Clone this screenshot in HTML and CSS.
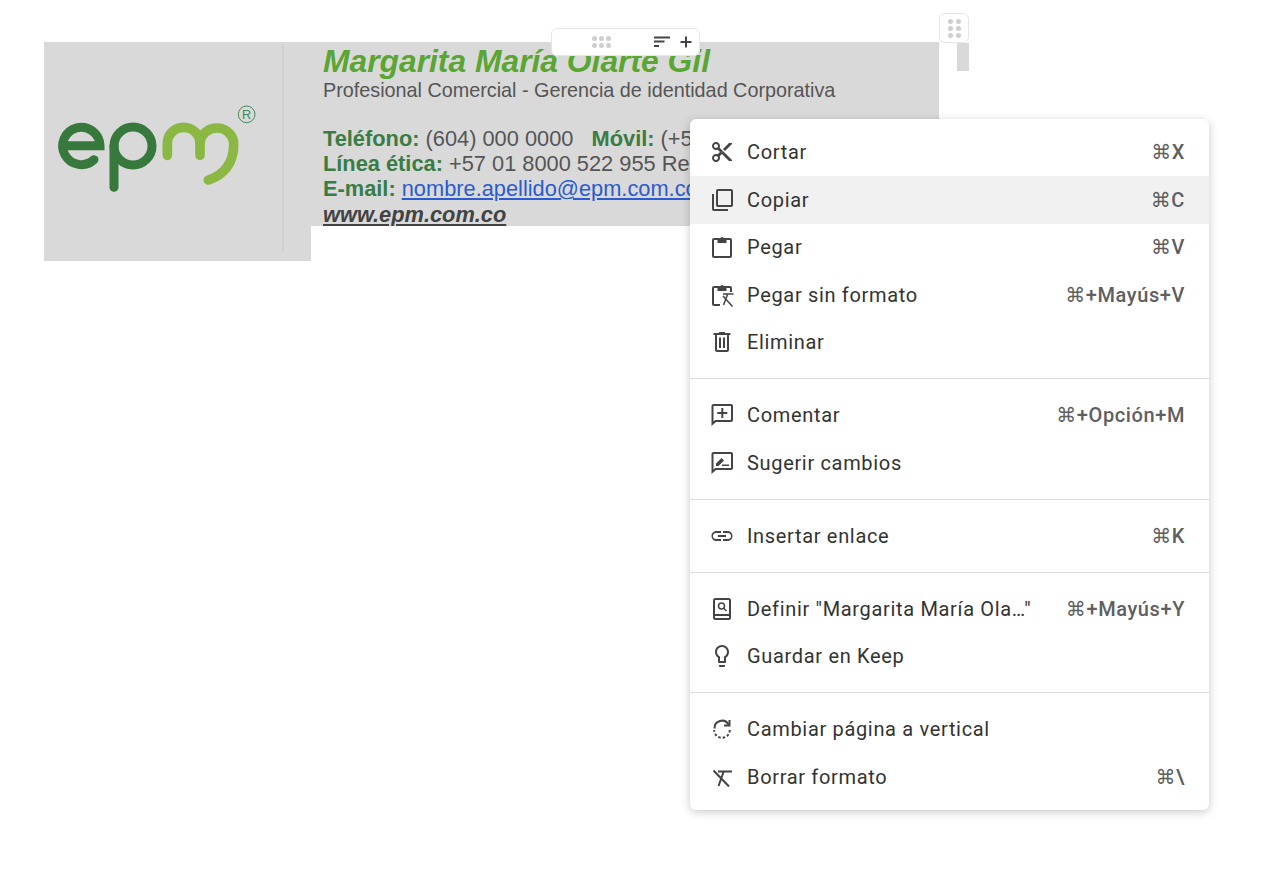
FILE: index.html
```html
<!DOCTYPE html>
<html lang="es">
<head>
<meta charset="utf-8">
<title>Firma EPM</title>
<link rel="stylesheet" href="styles.css">
</head>
<body>
<main class="page">
  <section class="signature">
    <div class="logo-cell">
      <svg class="logo" viewBox="0 0 630 300" width="210" height="100" aria-label="epm">
        <g class="logo-dark">
          <path d="M38 137H150A56 56 0 1 0 132 179"/>
          <circle cx="249" cy="138" r="57"/>
          <path d="M192 138V262"/>
        </g>
        <g class="logo-light">
          <path d="M352 166V130A49 48 0 0 1 450 130V166"/>
          <path d="M450 130A50 48 0 0 1 551 135C551 190 520 226 475 240"/>
        </g>
        <circle class="logo-reg" cx="590" cy="43" r="25"/>
        <text class="logo-r" x="590" y="57">R</text>
      </svg>
    </div>
    <div class="text-cell">
      <p class="name">Margarita María Olarte Gil</p>
      <p class="role">Profesional Comercial - Gerencia de identidad Corporativa</p>
      <p class="line blank">&nbsp;</p>
      <p class="line"><b>Teléfono:</b> (604) 000 0000 &nbsp; <b>Móvil:</b> (+5</p>
      <p class="line"><b>Línea ética:</b> +57 01 8000 522 955 Re</p>
      <p class="line"><b>E-mail:</b> <a class="mail" href="#">nombre.apellido@epm.com.co</a></p>
      <p class="line last"><a class="web" href="#">www.epm.com.co</a></p>
    </div>
  </section>
</main>

<div class="row-toolbar">
  <span class="dots dots-h"><i></i><i></i><i></i><i></i><i></i><i></i></span>
  <svg class="tool-icon" viewBox="0 0 16 12" width="16" height="12"><path d="M0 0.500h16v2H0zM0 4.500h10.500v2H0zM0 9h5v2H0z"/></svg>
  <svg class="tool-icon plus" viewBox="0 0 12 12" width="12" height="12"><path d="M5 .5h2v4.500h4.500v2H7v4.500H5V7H.5V5H5z"/></svg>
</div>

<div class="col-handle"><span class="dots dots-v"><i></i><i></i><i></i><i></i><i></i><i></i></span></div>
<div class="col-strip"></div>

<nav class="menu">
  <div class="item">
    <svg class="icon" viewBox="0 0 24 24"><path class="fill" d="M9.640 7.640c.23-.5.36-1.050.36-1.640 0-2.210-1.790-4-4-4S2 3.790 2 6s1.790 4 4 4c.59 0 1.140-.13 1.640-.36L10 12l-2.360 2.360C7.140 14.130 6.590 14 6 14c-2.210 0-4 1.790-4 4s1.790 4 4 4 4-1.790 4-4c0-.59-.13-1.140-.36-1.640L12 14l7 7h3v-1L9.640 7.640zM6 8c-1.100 0-2-.89-2-2s.9-2 2-2 2 .89 2 2-.9 2-2 2zm0 12c-1.100 0-2-.89-2-2s.9-2 2-2 2 .89 2 2-.9 2-2 2zm6-7.500c-.28 0-.5-.22-.5-.5s.22-.5.5-.5.5.22.5.5-.22.5-.5.5zM19 3l-6 6 2 2 7-7V3h-3z"/></svg>
    <span class="label">Cortar</span><span class="keys">⌘X</span>
  </div>
  <div class="item active">
    <svg class="icon" viewBox="0 0 24 24"><rect class="line-i" x="7" y="2" width="15" height="16" rx="1"/><path class="line-i" d="M3 6V21a1 1 0 0 0 1 1H18"/></svg>
    <span class="label">Copiar</span><span class="keys">⌘C</span>
  </div>
  <div class="item">
    <svg class="icon" viewBox="0 0 24 24"><rect class="line-i" x="3" y="4" width="18" height="18" rx="1"/><path class="fill" d="M7.500 3h3a1.700 1.700 0 0 1 3 0h3v5h-9z"/></svg>
    <span class="label">Pegar</span><span class="keys">⌘V</span>
  </div>
  <div class="item">
    <svg class="icon" viewBox="0 0 24 24"><path class="line-i" d="M10 22H4a1 1 0 0 1-1-1V5a1 1 0 0 1 1-1H20a1 1 0 0 1 1 1V9"/><path class="fill" d="M7.500 3h3a1.700 1.700 0 0 1 3 0h3v5h-9z"/><path class="line-t" d="M13 11H23.500M13 13L22.500 23.500M17.500 11.500L13.500 22"/></svg>
    <span class="label">Pegar sin formato</span><span class="keys">⌘+Mayús+V</span>
  </div>
  <div class="item">
    <svg class="icon" viewBox="0 0 24 24"><path class="fill" d="M15 3V2H9v1H3.500v2H5v15c0 1.100.9 2 2 2h10c1.100 0 2-.9 2-2V5h1.500V3h-5.500zm2 17H7V5h10v15zM9 7.500h2V18H9zm4 0h2V18h-2z"/></svg>
    <span class="label">Eliminar</span>
  </div>
  <hr class="sep">
  <div class="item">
    <svg class="icon" viewBox="0 0 24 24"><path class="fill" d="M21 1H3.500c-1.100 0-2 .9-2 2v20l4.500-4h15c1.100 0 2-.9 2-2V3c0-1.100-.9-2-2-2zm0 16H5.200l-1.700 1.600V3H21v14z"/><path class="fill" d="M11.300 5h2v4h4v2h-4v4h-2v-4h-4V9h4z"/></svg>
    <span class="label">Comentar</span><span class="keys">⌘+Opción+M</span>
  </div>
  <div class="item">
    <svg class="icon" viewBox="0 0 24 24"><path class="fill" d="M21 1H3.500c-1.100 0-2 .9-2 2v20l4.500-4h15c1.100 0 2-.9 2-2V3c0-1.100-.9-2-2-2zm0 16H5.200l-1.700 1.600V3H21v14z"/><path class="fill" d="M6 15v-2.500L11.500 7l2.500 2.500L8.500 15zM12 13.500h7V15h-7z"/></svg>
    <span class="label">Sugerir cambios</span>
  </div>
  <hr class="sep">
  <div class="item">
    <svg class="icon" viewBox="0 0 24 24"><path class="fill" d="M2.900 12c0-1.710 1.390-3.100 3.100-3.100h5V7H6.500c-2.760 0-5 2.240-5 5s2.240 5 5 5H11v-1.900H6c-1.710 0-3.100-1.390-3.100-3.100zM8 13h8v-2H8v2zm9.500-6H13v1.900h5c1.710 0 3.100 1.390 3.100 3.100s-1.390 3.100-3.100 3.100h-5V17h4.500c2.760 0 5-2.240 5-5s-2.240-5-5-5z"/></svg>
    <span class="label">Insertar enlace</span><span class="keys">⌘K</span>
  </div>
  <hr class="sep">
  <div class="item">
    <svg class="icon" viewBox="0 0 24 24"><rect class="line-i" x="4" y="2" width="16" height="20" rx="1.500"/><path class="line-i" d="M4 18H20"/><circle class="line-t" cx="11.500" cy="9" r="3"/><path class="line-t" d="M13.500 11L16.500 14"/></svg>
    <span class="label">Definir "Margarita María Ola…"</span><span class="keys">⌘+Mayús+Y</span>
  </div>
  <div class="item">
    <svg class="icon" viewBox="0 0 24 24"><path class="fill" d="M9 22c0 .55.45 1 1 1h4c.55 0 1-.45 1-1v-1H9v1zm3-21C8.140 1 5 4.140 5 8c0 2.380 1.190 4.470 3 5.740V18c0 .55.45 1 1 1h6c.55 0 1-.45 1-1v-4.260c1.810-1.270 3-3.360 3-5.740 0-3.860-3.140-7-7-7zm2.850 11.100l-.85.6V17h-4v-4.300l-.85-.6C7.800 11.160 7 9.630 7 8c0-2.760 2.240-5 5-5s5 2.240 5 5c0 1.630-.8 3.160-2.150 4.100z"/></svg>
    <span class="label">Guardar en Keep</span>
  </div>
  <hr class="sep">
  <div class="item">
    <svg class="icon" viewBox="0 0 24 24"><path class="line-i" d="M4.500 11.500A7.500 7.500 0 0 1 18.500 7.500"/><path class="line-i" d="M19.500 3V8.500H14"/><path class="line-d" d="M19.800 13A7.800 7.800 0 0 1 4.200 13"/></svg>
    <span class="label">Cambiar página a vertical</span>
  </div>
  <div class="item">
    <svg class="icon" viewBox="0 0 24 24"><path class="line-i" d="M3.500 5.500L19 21.500M13.500 7L8.500 21M8 6.500H22"/></svg>
    <span class="label">Borrar formato</span><span class="keys">⌘\</span>
  </div>
</nav>
</body>
</html>
```
FILE: styles.css
```css
* { box-sizing: border-box; }
html, body { margin: 0; padding: 0; background: #fff; }
body { width: 1280px; height: 882px; overflow: hidden; position: relative; }

.page { padding: 42px 0 0 44px; }

.signature { display: flex; align-items: flex-start; width: 895px; font-family: "Liberation Sans", Arial, sans-serif; }

.logo-cell {
  width: 267px; height: 219px; flex: none;
  background: #d9d9d9;
  padding: 58px 0 0 6px;
  position: relative;
}
.logo-cell::after {
  content: ""; position: absolute; left: 238px; top: 3px; width: 2px; height: 207px; background: #d1d1d1;
}
.logo { display: block; }
.logo-dark path, .logo-dark circle { fill: none; stroke: #37783c; stroke-width: 27; stroke-linecap: round; }
.logo-light path { fill: none; stroke: #8ab843; stroke-width: 29; stroke-linecap: round; }
.logo-reg { fill: none; stroke: #3f8a55; stroke-width: 3; }
.logo-r { fill: #3f8a55; font-family: "Liberation Sans", Arial, sans-serif; font-size: 38px; text-anchor: middle; }

.text-cell {
  flex: 1; min-width: 0; height: 184px; background: #d9d9d9;
  padding: 2px 0 0 12px; overflow: hidden; white-space: nowrap; color: #555;
}
.text-cell p { margin: 0; }
.name { font-size: 31.800px; line-height: 34px; font-weight: 700; font-style: italic; color: #5aa632; }
.role { font-size: 19.800px; line-height: 24px; color: #555; }
.line { font-size: 21.800px; line-height: 25px; color: #555; }
.line.blank { line-height: 24px; }
.line.last { margin-top: 1px; }
.line b { color: #3a7d44; }
.mail { color: #2a5bd0; text-decoration: underline; }
.web { color: #434343; font-weight: 700; font-style: italic; text-decoration: underline; }

.row-toolbar {
  position: absolute; left: 551px; top: 28px; width: 149px; height: 28px;
  background: #fff; border: 1px solid #e6e6e6; border-radius: 6px;
  display: flex; align-items: center; padding-left: 40px;
}
.dots { display: grid; gap: 2px; }
.dots i { display: block; width: 5px; height: 5px; border-radius: 50%; background: #cfcfcf; }
.dots-h { grid-template-columns: repeat(3, 5px); }
.dots-v { grid-template-columns: repeat(2, 5px); gap: 2px 3px; }
.tool-icon { fill: #444; flex: none; }
.row-toolbar .tool-icon { margin-left: 43px; }
.row-toolbar .plus { margin-left: 10px; }

.col-handle {
  position: absolute; left: 939px; top: 13px; width: 30px; height: 30px;
  background: #fff; border: 1px solid #e6e6e6; border-radius: 6px;
  display: flex; align-items: center; justify-content: center;
}
.col-strip { position: absolute; left: 957px; top: 43px; width: 12px; height: 28px; background: #d9d9d9; }

.menu {
  position: absolute; left: 690px; top: 119px; width: 519px; height: 691px;
  background: #fff; border-radius: 6px; padding: 9.500px 0;
  box-shadow: 0 2px 10px rgba(0, 0, 0, .22);
  font-family: Roboto, Arial, sans-serif;
}
.item { display: flex; align-items: center; height: 47.500px; padding: 0 24px 0 20px; }
.item.active { background: #f1f1f1; }
.icon { width: 24px; height: 24px; flex: none; margin-right: 13px; }
.fill { fill: #444; }
.line-i { fill: none; stroke: #444; stroke-width: 2; }
.line-t { fill: none; stroke: #444; stroke-width: 1.500; }
.line-d { fill: none; stroke: #444; stroke-width: 2; stroke-dasharray: 2.500 2; }
.label { flex: 1; font-size: 20px; letter-spacing: .67px; color: #333; white-space: nowrap; }
.keys { font-size: 20px; letter-spacing: .6px; font-weight: 500; color: #5f5f5f; white-space: nowrap; font-family: Roboto, "DejaVu Sans", sans-serif; }
.sep { border: 0; height: 1px; background: #dadce0; margin: 12.250px 0; }
```
